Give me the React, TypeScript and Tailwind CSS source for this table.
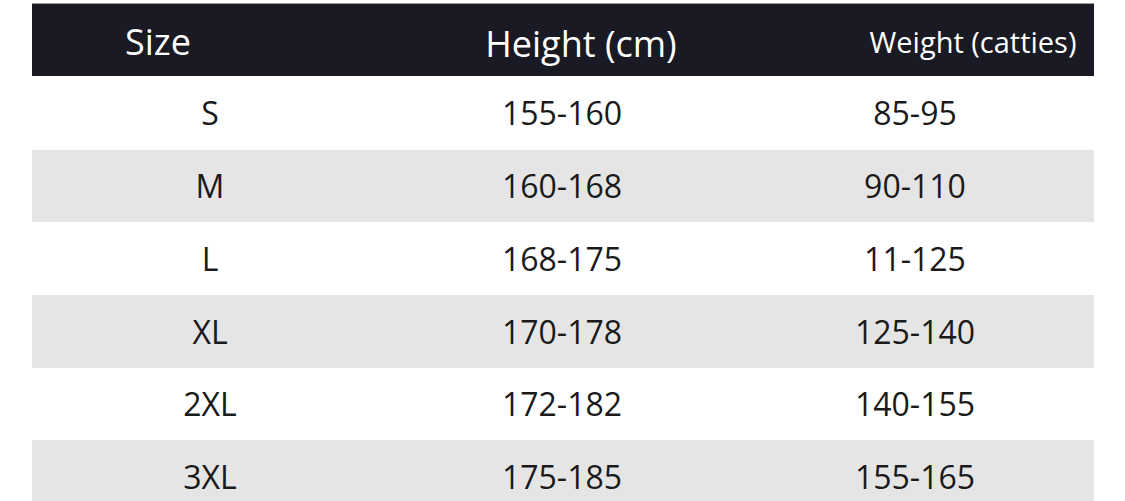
import React from "react";

const rows = [
  { size: "S", height: "155-160", weight: "85-95", h: "h-[74px]", bg: "bg-white" },
  { size: "M", height: "160-168", weight: "90-110", h: "h-[72px]", bg: "bg-[#e5e5e5]" },
  { size: "L", height: "168-175", weight: "11-125", h: "h-[73px]", bg: "bg-white" },
  { size: "XL", height: "170-178", weight: "125-140", h: "h-[73px]", bg: "bg-[#e5e5e5]" },
  { size: "2XL", height: "172-182", weight: "140-155", h: "h-[72px]", bg: "bg-white" },
  { size: "3XL", height: "175-185", weight: "155-165", h: "h-[73px]", bg: "bg-[#e5e5e5]" },
];

export default function App() {
  return (
    <div
      className="w-[1125px] h-[501px] overflow-hidden bg-white pt-[3px] pl-[32px]"
      style={{ fontFamily: '"Open Sans", "Noto Sans", sans-serif' }}
    >
      <div className="w-[1062px]">
        <div className="grid grid-cols-[356px_348px_358px] h-[73px] bg-[#191a24] border-t border-[#9a9aa0] text-white items-center">
          <div className="flex justify-center pr-[104px] pt-[4px] text-[36px] leading-none">Size</div>
          <div className="flex justify-center pl-[38px] pt-[8px] text-[36px] leading-none">Height (cm)</div>
          <div className="flex justify-center pl-[116px] pt-[2px] text-[29px] leading-none">Weight (catties)</div>
        </div>
        {rows.map((r) => (
          <div
            key={r.size}
            className={`grid grid-cols-[356px_348px_358px] items-center ${r.h} ${r.bg} text-[#1a1a1a] text-[32px] leading-none`}
          >
            <div className="flex justify-center">{r.size}</div>
            <div className="flex justify-center">{r.height}</div>
            <div className="flex justify-center">{r.weight}</div>
          </div>
        ))}
      </div>
    </div>
  );
}
